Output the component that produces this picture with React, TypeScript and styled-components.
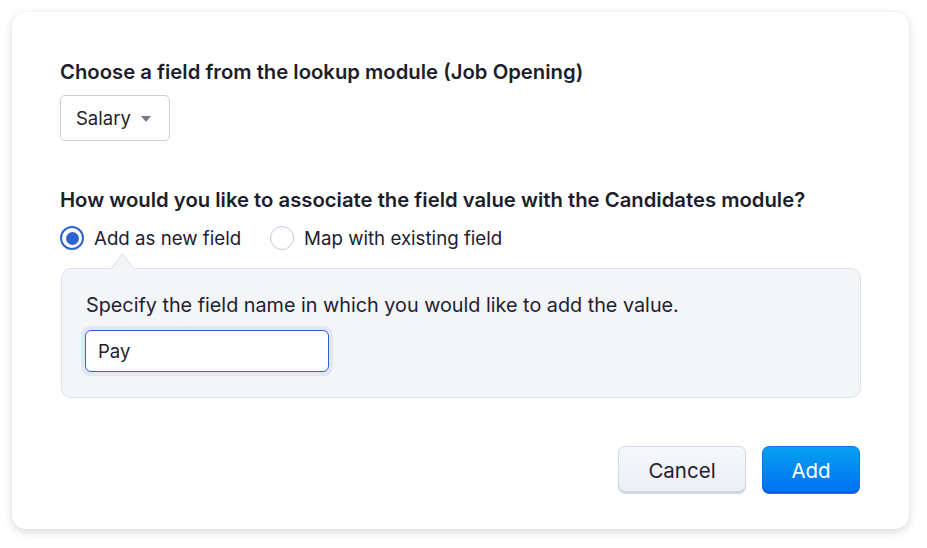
import React, { useState } from 'react';
import styled, { createGlobalStyle } from 'styled-components';

const GlobalStyle = createGlobalStyle`
    html, body {
        margin: 0;
        padding: 0;
        background: #ffffff;
    }
    body {
        font-family: Inter, "Noto Sans", "Liberation Sans", sans-serif;
        color: #1e2130;
    }
`;

const Page = styled.div`
    padding: 12px;
    width: 927px;
    height: 548px;
    box-sizing: border-box;
`;

const Card = styled.section`
    width: 897px;
    height: 517px;
    box-sizing: border-box;
    background: #fff;
    border-radius: 14px;
    box-shadow: 0 3px 10px rgba(0, 0, 0, 0.14), 0 0 2px rgba(0, 0, 0, 0.06);
    padding: 47px 48px 0 48px;
    display: flex;
    flex-direction: column;
`;

const Heading = styled.h3<{ $top?: number }>`
    margin: ${(p) => p.$top || 0}px 0 0 0;
    font-size: 20.3px;
    line-height: 26px;
    font-weight: 600;
    color: #1c1f2b;
`;

const Select = styled.button`
    margin-top: 10px;
    align-self: flex-start;
    height: 46px;
    width: 110px;
    box-sizing: border-box;
    border: 1.5px solid #c9cedb;
    border-radius: 5px;
    background: #fff;
    font-family: inherit;
    font-size: 18.5px;
    color: #1e2130;
    display: flex;
    align-items: center;
    gap: 10px;
    padding: 0 0 0 15px;
`;

const Caret = styled.span`
    width: 0;
    height: 0;
    border-left: 5px solid transparent;
    border-right: 5px solid transparent;
    border-top: 6px solid #757a8c;
    margin-top: 1px;
`;

const RadioRow = styled.div`
    margin-top: 10px;
    display: flex;
    align-items: center;
    gap: 29px;
    height: 30px;
`;

const RadioLabel = styled.label`
    display: flex;
    align-items: center;
    gap: 10px;
    font-size: 18.7px;
    color: #1e2130;
    cursor: pointer;
`;

const RadioDot = styled.span<{ $checked: boolean }>`
    width: 24px;
    height: 24px;
    box-sizing: border-box;
    border-radius: 50%;
    border: ${(p) => (p.$checked ? '2px solid #2f63d0' : '1.5px solid #c6cbd8')};
    display: flex;
    align-items: center;
    justify-content: center;
    background: #fff;
    &::after {
        content: '';
        width: 13px;
        height: 13px;
        border-radius: 50%;
        background: #2f63d0;
        display: ${(p) => (p.$checked ? 'block' : 'none')};
    }
`;

const Panel = styled.div`
    position: relative;
    margin-top: 15px;
    margin-left: 1px;
    width: 800px;
    box-sizing: border-box;
    background: #f4f5f9;
    border: 1px solid #dde2ee;
    border-radius: 10px;
    padding: 23px 24px 21px 24px;
    display: flex;
    flex-direction: column;
    align-items: flex-start;
    &::before {
        content: '';
        position: absolute;
        top: -10px;
        left: 51px;
        width: 18px;
        height: 18px;
        background: #f4f5f9;
        border-left: 1px solid #dde2ee;
        border-top: 1px solid #dde2ee;
        transform: rotate(45deg) skew(8deg, 8deg);
    }
`;

const PanelText = styled.p`
    margin: 0;
    font-size: 19.8px;
    line-height: 26px;
    color: #1e2130;
`;

const InputRing = styled.div`
    margin-top: 8px;
    margin-left: -5px;
    display: flex;
    padding: 4px;
    border-radius: 9px;
    background: #e1e7f6;
`;

const TextInput = styled.input`
    width: 244px;
    height: 42px;
    box-sizing: border-box;
    border: 1.5px solid #2f63d0;
    border-radius: 6px;
    padding: 0 12px;
    font-family: inherit;
    font-size: 18.5px;
    color: #1e2130;
    caret-color: #1e2130;
    outline: none;
    background: #fff;
`;

const Footer = styled.div`
    margin-top: 48px;
    display: flex;
    justify-content: flex-end;
    gap: 16px;
    padding-right: 1px;
`;

const Button = styled.button<{ $primary?: boolean }>`
    height: 48px;
    min-width: ${(p) => (p.$primary ? 98 : 128)}px;
    box-sizing: border-box;
    border-radius: 7px;
    font-family: inherit;
    font-size: 20.5px;
    cursor: pointer;
    border: ${(p) => (p.$primary ? '1px solid #0a78e8' : '1.5px solid #d3d7e2')};
    color: ${(p) => (p.$primary ? '#fff' : '#1e2130')};
    background: ${(p) =>
        p.$primary ? 'linear-gradient(#06a0f2, #0070f2)' : 'linear-gradient(#f7f8fb, #eceef5)'};
    box-shadow: ${(p) => (p.$primary ? 'inset 0 -2px 0 #0a5fd0' : 'inset 0 -2px 0 #d0d4df')};
`;

const App: React.FunctionComponent = (): JSX.Element => {
    const [mode, setMode] = useState<'new' | 'map'>('new');
    const [value, setValue] = useState('Pay');

    return (
        <Page>
            <GlobalStyle />
            <Card>
                <Heading>Choose a field from the lookup module (Job Opening)</Heading>
                <Select>
                    Salary
                    <Caret />
                </Select>
                <Heading $top={46}>How would you like to associate the field value with the Candidates module?</Heading>
                <RadioRow>
                    <RadioLabel onClick={() => setMode('new')}>
                        <RadioDot $checked={mode === 'new'} />
                        Add as new field
                    </RadioLabel>
                    <RadioLabel onClick={() => setMode('map')}>
                        <RadioDot $checked={mode === 'map'} />
                        Map with existing field
                    </RadioLabel>
                </RadioRow>
                <Panel>
                    <PanelText>Specify the field name in which you would like to add the value.</PanelText>
                    <InputRing>
                        <TextInput autoFocus value={value} onChange={(e) => setValue(e.target.value)} />
                    </InputRing>
                </Panel>
                <Footer>
                    <Button>Cancel</Button>
                    <Button $primary>Add</Button>
                </Footer>
            </Card>
        </Page>
    );
};

export default App;
